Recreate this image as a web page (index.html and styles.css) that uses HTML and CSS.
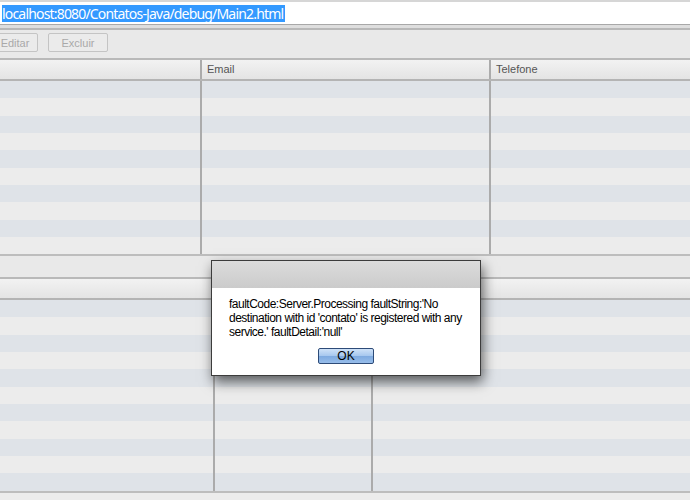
FILE: index.html
```html
<!DOCTYPE html>
<html lang="pt">
<head>
<meta charset="utf-8">
<title>Contatos</title>
<link rel="stylesheet" href="styles.css">
</head>
<body>
<div class="urlbar"><span class="sel">localhost:8080/Contatos-Java/debug/Main2.html</span></div>
<div class="sep"></div>
<div class="toolbar">
  <button class="btn btn-edit" disabled>Editar</button>
  <button class="btn" disabled>Excluir</button>
</div>
<div class="grid grid-top">
  <div class="head">
    <div class="hcell"></div>
    <div class="hcell">Email</div>
    <div class="hcell">Telefone</div>
  </div>
  <div class="body body-top">
    <div class="col"></div>
    <div class="col"></div>
    <div class="col"></div>
  </div>
</div>
<div class="gap"></div>
<div class="grid grid-bottom">
  <div class="head">
    <div class="hcell"></div>
    <div class="hcell"></div>
    <div class="hcell"></div>
  </div>
  <div class="body body-bottom">
    <div class="col"></div>
    <div class="col"></div>
    <div class="col"></div>
  </div>
</div>
<div class="dialog">
  <div class="dialog-title"></div>
  <div class="dialog-body">
    <p class="msg">faultCode:Server.Processing faultString:'No destination with id 'contato' is registered with any service.' faultDetail:'null'</p>
    <button class="ok">OK</button>
  </div>
</div>
</body>
</html>
```
FILE: styles.css
```css
html, body {
  margin: 0;
  padding: 0;
}
body {
  width: 690px;
  height: 500px;
  overflow: hidden;
  background: #ececec;
  font-family: "Liberation Sans", Arial, sans-serif;
  position: relative;
}
.urlbar {
  height: 22px;
  background: #fff;
  border-top: 2px solid #d6d6d6;
  display: flex;
  align-items: center;
  padding-left: 2px;
}
.sel {
  font-family: "Noto Sans", "Open Sans", sans-serif;
  font-size: 14px;
  letter-spacing: -0.82px;
  line-height: 17px;
  padding-right: 2px;
  background: #3399ff;
  color: #fff;
  white-space: nowrap;
}
.sep {
  height: 3px;
  border-top: 1px solid #a8a8a8;
  border-bottom: 2px solid #b8b8b8;
  background: #dedede;
}
.toolbar {
  height: 28px;
  background: #e9e9e9;
  display: flex;
  align-items: flex-start;
  gap: 10px;
  padding-top: 3px;
  box-sizing: border-box;
}
.btn {
  width: 60px;
  height: 19px;
  border: 1px solid #c4c4c4;
  border-radius: 2px;
  background: #ebebeb;
  color: #a9a9a9;
  font-family: "Liberation Sans", Arial, sans-serif;
  font-size: 11px;
  padding: 0;
}
.btn-edit {
  margin-left: -22px;
  padding-left: 14px;
}
.grid {
  border-top: 2px solid #b9b9b9;
  border-bottom: 2px solid #bdbdbd;
}
.grid-top .head,
.grid-top .body {
  display: grid;
  grid-template-columns: 200px 289px 1fr;
}
.grid-bottom .head,
.grid-bottom .body {
  display: grid;
  grid-template-columns: 213px 158px 1fr;
}
.head {
  background: linear-gradient(#f2f2f2, #e4e4e4);
  border-bottom: 2px solid #b4b4b4;
  height: 19px;
}
.hcell {
  font-size: 11px;
  color: #555;
  line-height: 19px;
  padding-left: 5px;
}
.hcell + .hcell,
.col + .col {
  border-left: 2px solid #ababab;
}
.body {
  background: repeating-linear-gradient(#dfe3e8 0, #dfe3e8 17.333px, #ececec 17.333px, #ececec 34.667px);
}
.body-top { height: 173.333px; }
.body-bottom { height: 190.667px; }
.gap {
  height: 21px;
  background: #e9e9e9;
}
.dialog {
  position: absolute;
  left: 211px;
  top: 260px;
  width: 268px;
  height: 114px;
  border: 1px solid #3c3c3c;
  background: #fff;
  box-shadow: 2px 6px 12px rgba(0, 0, 0, 0.6);
}
.dialog-title {
  height: 27px;
  background: linear-gradient(#dcdcdc, #cbcbcb);
}
.dialog-body {
  display: flex;
  flex-direction: column;
  align-items: center;
  padding: 9px 10px 0 17px;
}
.msg {
  margin: 0;
  font-size: 12px;
  letter-spacing: -0.5px;
  line-height: 14px;
  color: #000;
  align-self: stretch;
}
.ok {
  margin-top: 9px;
  margin-right: 7px;
  width: 56px;
  height: 16px;
  padding: 0;
  border: 1px solid #2d4b78;
  border-radius: 2px;
  background: linear-gradient(#cfe2f8, #a6c7ee 50%, #7eaae0 51%, #97bdea);
  font-family: "Liberation Sans", Arial, sans-serif;
  font-size: 12px;
  color: #000;
  line-height: 14px;
}
```
